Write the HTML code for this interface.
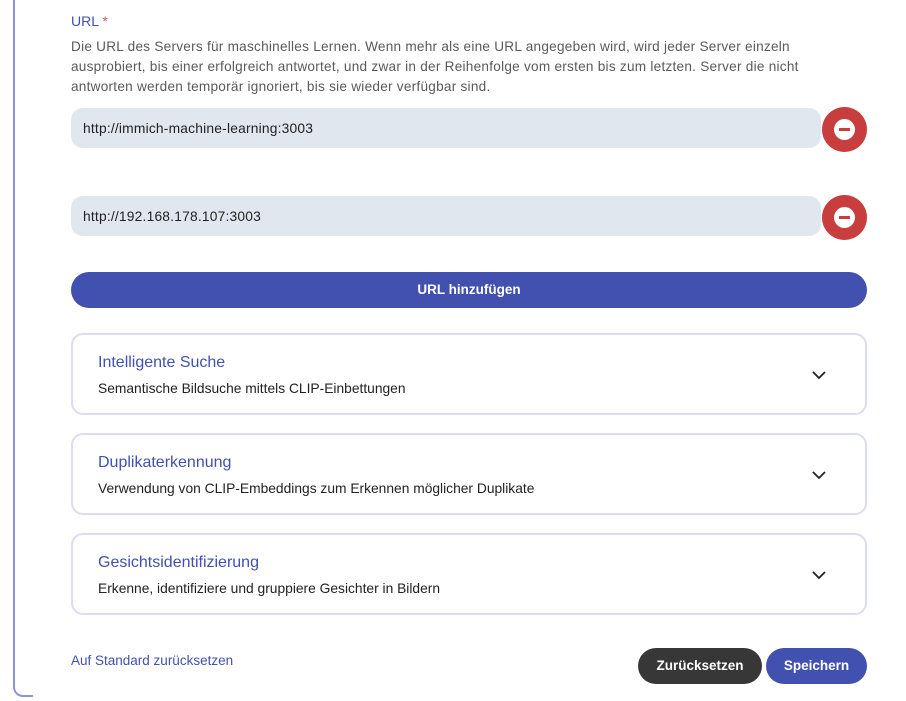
<!DOCTYPE html>
<html><head><style>
*{box-sizing:border-box;margin:0;padding:0}
body{width:906px;height:701px;background:#fff;font-family:"Liberation Sans",sans-serif;position:relative;overflow:hidden;color:#212121}
.frame{position:absolute;left:13px;top:-20px;width:20px;height:717px;border-left:2px solid #8f94d8;border-bottom:2px solid #8f94d8;border-bottom-left-radius:10px}
.abs{position:absolute}
.lbl{left:71px;top:13px;font-size:14px;color:#4250af}
.lbl span{color:#e05260}
.desc{left:71px;top:37px;width:790px;font-size:13.6px;letter-spacing:0.25px;line-height:20px;color:#5a5a5a}
.inp{left:71px;width:750px;height:40px;background:#e1e7ef;border-radius:12px;font-size:13.8px;padding-left:12px;line-height:42px;color:#222;letter-spacing:0.2px}
.rm{width:45px;height:45px;border-radius:50%;background:#c83e3e;left:822px}
.rm::after{content:"";position:absolute;left:12px;top:12px;width:21px;height:21px;border-radius:50%;background:#fff}
.rm::before{content:"";position:absolute;left:17px;top:21px;width:11px;height:3px;background:#c83e3e;z-index:2}
.add{left:71px;top:272px;width:796px;height:36px;border-radius:18px;background:#4250af;color:#fff;font-weight:bold;font-size:13.5px;text-align:center;line-height:36px}
.card{left:71px;width:796px;height:82px;border:2px solid #dcdcf2;border-radius:12px}
.card h3{position:absolute;left:25px;top:19px;font-size:16px;font-weight:normal;color:#4250af}
.card p{position:absolute;left:25px;top:46px;font-size:13.8px;color:#222}
.card svg{position:absolute;left:738px;top:32px}
.link{left:71px;top:653px;font-size:13.5px;color:#4250af}
.btn{top:648px;height:36px;border-radius:18px;color:#fff;font-weight:bold;font-size:13.5px;text-align:center;line-height:36px}
</style></head><body>
<div class="frame"></div>
<div class="abs lbl">URL <span>*</span></div>
<div class="abs desc">Die URL des Servers für maschinelles Lernen. Wenn mehr als eine URL angegeben wird, wird jeder Server einzeln ausprobiert, bis einer erfolgreich antwortet, und zwar in der Reihenfolge vom ersten bis zum letzten. Server die nicht antworten werden temporär ignoriert, bis sie wieder verfügbar sind.</div>
<div class="abs inp" style="top:108px">http://immich-machine-learning:3003</div>
<div class="abs rm" style="top:107px"></div>
<div class="abs inp" style="top:196px">http://192.168.178.107:3003</div>
<div class="abs rm" style="top:195px"></div>
<div class="abs add">URL hinzufügen</div>
<div class="abs card" style="top:333px"><h3>Intelligente Suche</h3><p>Semantische Bildsuche mittels CLIP-Einbettungen</p><svg width="16" height="16" viewBox="0 0 16 16"><path d="M2 5l6 6 6-6" fill="none" stroke="#222" stroke-width="1.8"/></svg></div>
<div class="abs card" style="top:433px"><h3>Duplikaterkennung</h3><p>Verwendung von CLIP-Embeddings zum Erkennen möglicher Duplikate</p><svg width="16" height="16" viewBox="0 0 16 16"><path d="M2 5l6 6 6-6" fill="none" stroke="#222" stroke-width="1.8"/></svg></div>
<div class="abs card" style="top:533px"><h3>Gesichtsidentifizierung</h3><p>Erkenne, identifiziere und gruppiere Gesichter in Bildern</p><svg width="16" height="16" viewBox="0 0 16 16"><path d="M2 5l6 6 6-6" fill="none" stroke="#222" stroke-width="1.8"/></svg></div>
<div class="abs link">Auf Standard zurücksetzen</div>
<div class="abs btn" style="left:638px;width:124px;background:#373737">Zurücksetzen</div>
<div class="abs btn" style="left:766px;width:101px;background:#4250af">Speichern</div>
</body></html>
